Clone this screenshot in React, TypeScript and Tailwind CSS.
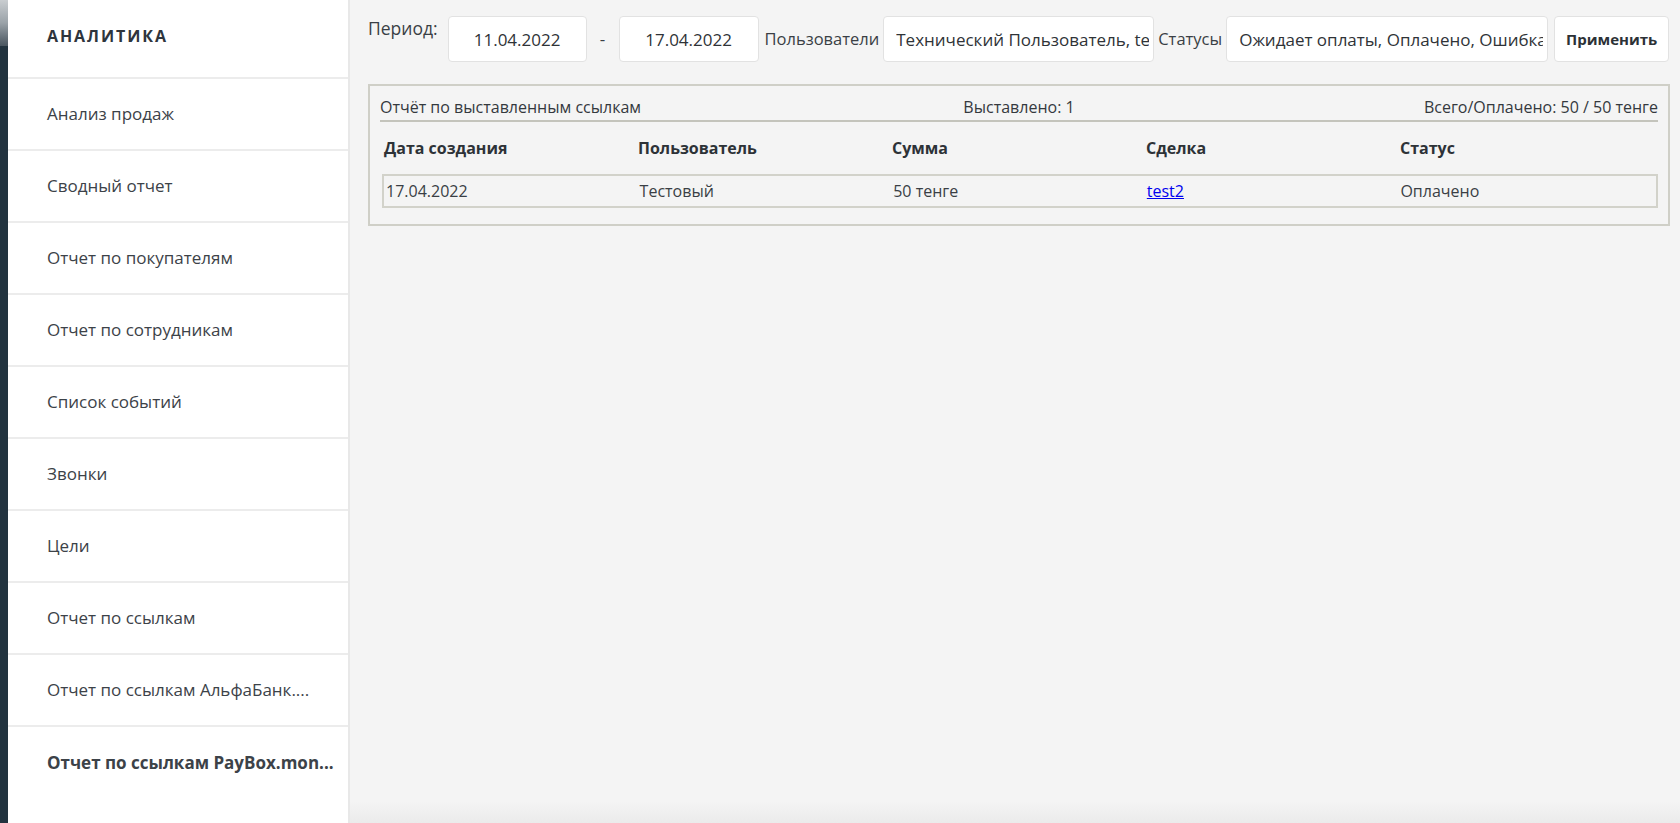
import React from 'react';

const menuItems = [
  'Анализ продаж',
  'Сводный отчет',
  'Отчет по покупателям',
  'Отчет по сотрудникам',
  'Список событий',
  'Звонки',
  'Цели',
  'Отчет по ссылкам',
  'Отчет по ссылкам АльфаБанк....',
  'Отчет по ссылкам PayBox.mon...',
];

const columns = ['Дата создания', 'Пользователь', 'Сумма', 'Сделка', 'Статус'];

const Sidebar: React.FC = () => (
  <aside className="flex w-[342px] shrink-0 flex-col border-r-2 border-[#e8e8e8] bg-white">
    <div className="h-[79px] border-b-2 border-[#ececec] pl-[39px] pt-[24px]">
      <span className="text-[16px] leading-[22px] font-bold tracking-[0.12em] text-[#2e353d]">АНАЛИТИКА</span>
    </div>
    {menuItems.map((item, i) => {
      const active = i === menuItems.length - 1;
      return (
        <div
          key={item}
          className={`flex h-[72px] items-center pl-[39px] ${active ? '' : 'border-b-2 border-[#ececec]'}`}
        >
          <span
            className={`text-[17px] text-[#3c4248] ${active ? 'font-bold text-[#2e343a]' : ''}`}
          >
            {item}
          </span>
        </div>
      );
    })}
  </aside>
);

const Field: React.FC<{ value: string; width: string; center?: boolean }> = ({ value, width, center }) => (
  <input
    readOnly
    value={value}
    className={`${width} h-[46px] shrink-0 rounded-[4px] border border-[#e2e2e2] bg-white text-[17px] text-[#2f3337] outline-none ${
      center ? 'text-center' : 'pl-[12px] pr-[4px]'
    }`}
  />
);

const Toolbar: React.FC = () => (
  <div className="flex items-start">
    <span className="mt-[1px] text-[17.5px] leading-[22px] text-[#3a3f45]">Период:</span>
    <div className="ml-[10px] flex items-center">
      <Field value="11.04.2022" width="w-[139px]" center />
      <span className="w-[32px] text-center text-[17px] text-[#3a3f45]">-</span>
      <Field value="17.04.2022" width="w-[140px]" center />
      <span className="ml-[6px] mr-[4px] text-[16.5px] text-[#3a3f45]">Пользователи</span>
      <Field value="Технический Пользователь, test" width="w-[271px]" />
      <span className="ml-[4px] mr-[4px] text-[16.5px] text-[#3a3f45]">Статусы</span>
      <Field value="Ожидает оплаты, Оплачено, Ошибка оплаты" width="w-[322px]" />
      <button
        type="button"
        className="ml-[6px] h-[46px] w-[115px] rounded-[4px] border border-[#e2e2e2] bg-white text-[15px] font-bold text-[#2c3136]"
      >
        Применить
      </button>
    </div>
  </div>
);

const Report: React.FC = () => (
  <div className="mt-[22px] mr-[10px] border-2 border-[#cfcfc7] px-[10px] pt-[10px] pb-[16px]">
    <div className="grid grid-cols-3 border-b-2 border-[#c4c4bc] pb-[2px] text-[16px] leading-[22px] text-[#34393e]">
      <span>Отчёт по выставленным ссылкам</span>
      <span className="text-center">Выставлено: 1</span>
      <span className="text-right">Всего/Оплачено: 50 / 50 тенге</span>
    </div>
    <div className="grid h-[52px] grid-cols-5 items-center px-[4px] text-[16px] font-bold text-[#2d3237]">
      {columns.map((c) => (
        <span key={c}>{c}</span>
      ))}
    </div>
    <div className="ml-[2px] grid h-[34px] grid-cols-5 items-center border-2 border-[#d2d2ca] px-[2px] text-[16px] text-[#3a3f45]">
      <span>17.04.2022</span>
      <span>Тестовый</span>
      <span>50 тенге</span>
      <span>
        <a href="#" className="text-[#0000ee] underline">
          test2
        </a>
      </span>
      <span>Оплачено</span>
    </div>
  </div>
);

export default function App() {
  return (
    <div
      className="flex h-[823px] w-full overflow-hidden bg-[#f4f4f4]"
      style={{ fontFamily: '"Open Sans", "Noto Sans", sans-serif' }}
    >
      <div className="flex w-[8px] shrink-0 flex-col bg-[#22333f]">
        <div className="h-[46px] bg-gradient-to-b from-[#c9cdd0] via-[#9aa2a8] to-[#4a5660]" />
      </div>
      <Sidebar />
      <main className="flex min-w-0 flex-1 flex-col">
        <div className="flex-1 pl-[18px] pt-[16px]">
          <Toolbar />
          <Report />
        </div>
        <div className="h-[22px] bg-gradient-to-b from-[#f4f4f4] to-[#ebebeb]" />
      </main>
    </div>
  );
}
